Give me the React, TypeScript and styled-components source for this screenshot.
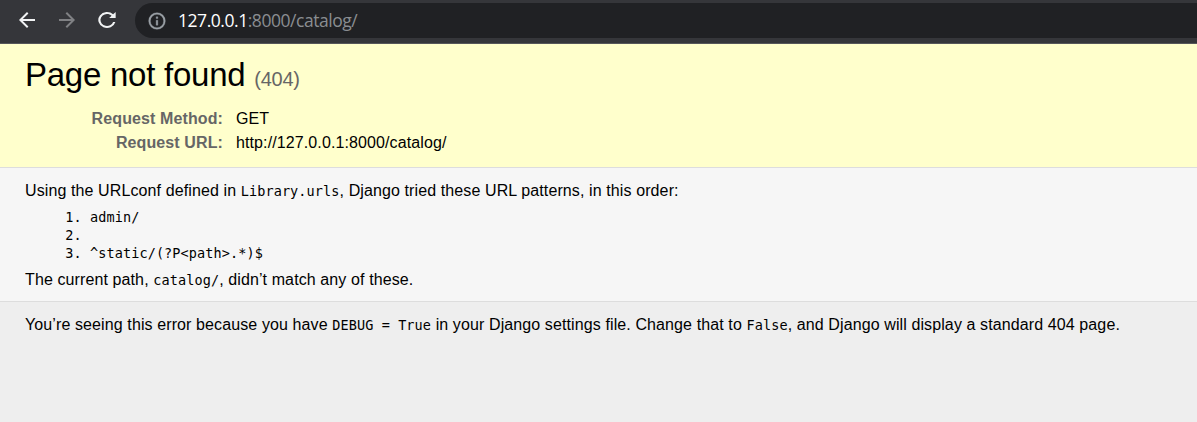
import React from 'react';
import styled, { createGlobalStyle } from 'styled-components';

const GlobalStyle = createGlobalStyle`
  html, body { margin: 0; padding: 0; background: #eee; }
  body { font: 16px "Liberation Sans", Arial, sans-serif; letter-spacing: 0.108px; color: #000; overflow: hidden; }
  * { box-sizing: border-box; }
`;

const Toolbar = styled.header`
  height: 44px;
  background: #35363a;
  border-bottom: 1px solid #55565a;
  display: flex;
  align-items: flex-start;
  padding-top: 3px;
`;
const NavIcons = styled.div`
  display: flex;
  width: 135px;
  height: 34px;
  align-items: center;
  padding-left: 15px;
  gap: 16px;
`;
const Icon = styled.svg<{ $dim?: boolean }>`
  width: 24px;
  height: 24px;
  flex: none;
  fill: ${(p) => (p.$dim ? '#808184' : '#f1f3f4')};
`;
const ReloadIcon = styled(Icon)`
  width: 26px;
  height: 24px;
  margin-left: -1px;
`;
const AddressBar = styled.div`
  flex: 1;
  height: 35px;
  background: #202124;
  border-radius: 18px 0 0 18px;
  display: flex;
  align-items: center;
  padding-left: 12px;
`;
const InfoIcon = styled(Icon)`
  width: 20px;
  height: 20px;
  fill: #9aa0a6;
  margin-right: 11px;
`;
const Address = styled.span`
  font: 17.5px/35px "Open Sans", sans-serif;
  letter-spacing: -0.46px;
  color: #8a8d91;
  b { font-weight: 400; color: #fff; }
`;
const Summary = styled.section`
  background: #ffc;
  height: 124px;
  border-bottom: 1px solid #ddd;
  padding: 12px 25px 0;
`;
const Title = styled.h1`
  margin: 0;
  font-weight: 400;
  font-size: 33px;
  line-height: 38px;
  letter-spacing: -0.25px;
  span { color: #666; font-size: 20px; }
`;
const Meta = styled.dl`
  margin: 9px 0 0;
  display: grid;
  grid-template-columns: 198px 1fr;
  column-gap: 13px;
  line-height: 24px;
  dt { text-align: right; font-weight: 700; color: #666; }
  dd { margin: 0; }
`;
const Info = styled.section`
  background: #f6f6f6;
  height: 134px;
  border-bottom: 1px solid #ddd;
  padding: 13px 25px 0;
`;
const Text = styled.p`
  margin: 0;
  line-height: 20px;
  white-space: nowrap;
`;
const Code = styled.code`
  font: 13.5px "DejaVu Sans Mono", monospace;
`;
const Patterns = styled.ol`
  margin: 7px 0 8px;
  padding-left: 65px;
  font: 13.5px/18px "DejaVu Sans Mono", monospace;
`;
const Explanation = styled.section`
  background: #eee;
  height: 120px;
  padding: 13px 25px 0;
`;

export default function App() {
  return (
    <>
      <GlobalStyle />
      <Toolbar>
        <NavIcons>
          <Icon viewBox="0 0 24 24"><path d="M20 11H7.83l5.59-5.59L12 4l-8 8 8 8 1.41-1.41L7.83 13H20z" /></Icon>
          <Icon $dim viewBox="0 0 24 24"><path d="M12 4l-1.41 1.41L16.17 11H4v2h12.17l-5.58 5.59L12 20l8-8z" /></Icon>
          <ReloadIcon viewBox="0 0 24 24" preserveAspectRatio="none"><path d="M17.65 6.35A8 8 0 1 0 19.73 14h-2.08A6 6 0 1 1 12 6c1.66 0 3.14.69 4.22 1.78L14 10h6V4z" /></ReloadIcon>
        </NavIcons>
        <AddressBar>
          <InfoIcon viewBox="0 0 24 24"><path d="M11 7h2v2h-2zm0 4h2v6h-2zm1-9a10 10 0 1 0 0 20 10 10 0 0 0 0-20zm0 18a8 8 0 1 1 0-16 8 8 0 0 1 0 16z" stroke="#9aa0a6" strokeWidth="0.4" /></InfoIcon>
          <Address><b>127.0.0.1</b>:8000/catalog/</Address>
        </AddressBar>
      </Toolbar>
      <Summary>
        <Title>Page not found <span>(404)</span></Title>
        <Meta>
          <dt>Request Method:</dt><dd>GET</dd>
          <dt>Request URL:</dt><dd>http://127.0.0.1:8000/catalog/</dd>
        </Meta>
      </Summary>
      <Info>
        <Text>Using the URLconf defined in <Code>Library.urls</Code>, Django tried these URL patterns, in this order:</Text>
        <Patterns><li>admin/</li><li /><li>^static/(?P&lt;path&gt;.*)$</li></Patterns>
        <Text>The current path, <Code>catalog/</Code>, didn’t match any of these.</Text>
      </Info>
      <Explanation>
        <Text>You’re seeing this error because you have <Code>DEBUG = True</Code> in your Django settings file. Change that to <Code>False</Code>, and Django will display a standard 404 page.</Text>
      </Explanation>
    </>
  );
}
